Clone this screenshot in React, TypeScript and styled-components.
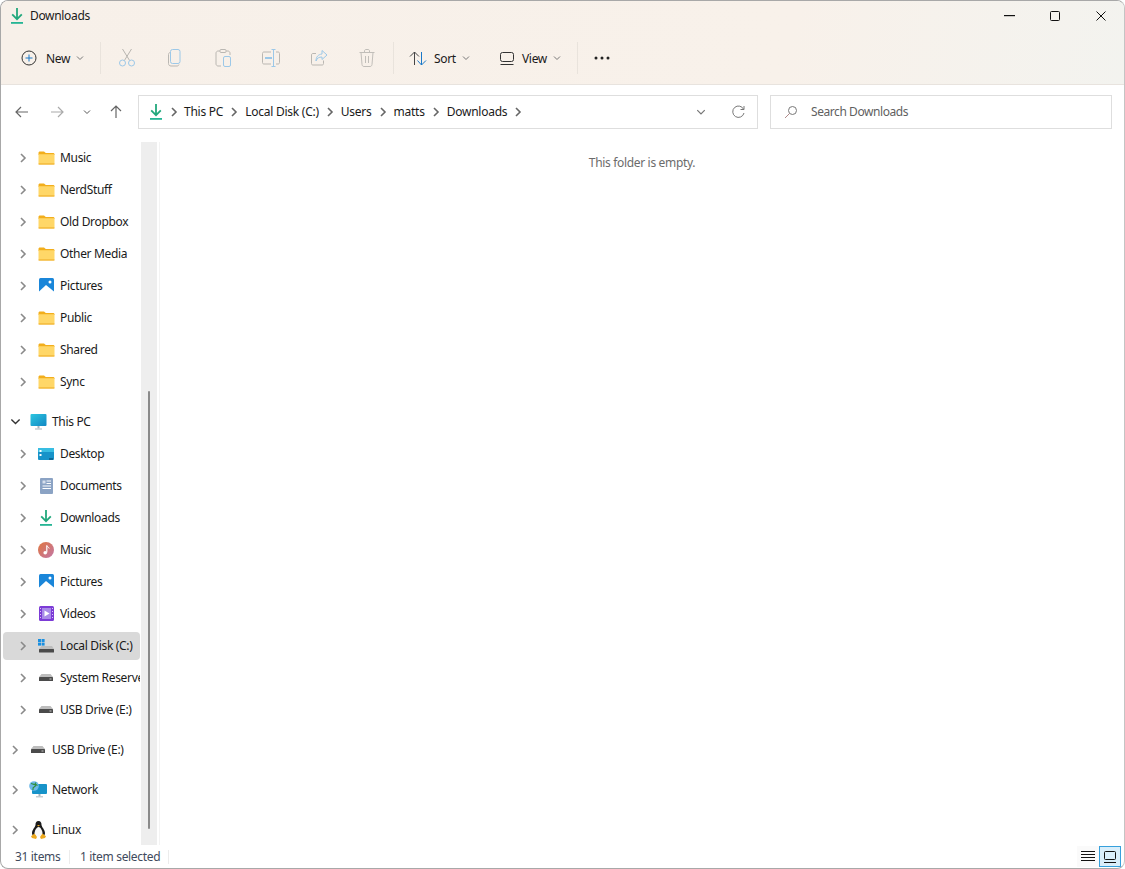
import type { ReactNode } from "react";
import styled, { createGlobalStyle } from "styled-components";

const GlobalStyle = createGlobalStyle`
  html, body {
    margin: 0;
    padding: 0;
    background: #fff;
  }
  body {
    font-family: "Noto Sans", "Open Sans", sans-serif;
    font-size: 12px;
    letter-spacing: -0.33px;
    color: #1a1a1a;
  }
`;

const Window = styled.div`
  box-sizing: border-box;
  width: 1125px;
  height: 869px;
  display: flex;
  flex-direction: column;
  overflow: hidden;
  background: #fff;
  border: 1px solid #a8a8a8;
  border-right-color: #c4c4c4;
  border-radius: 8px;
`;

const Header = styled.header`
  height: 83px;
  flex: none;
  display: flex;
  flex-direction: column;
  background: linear-gradient(100deg, #f7f0e9 0%, #f8f1ea 70%, #f3f3ef 100%);
  border-bottom: 1px solid #e8e3de;
`;

const TitleBar = styled.div`
  height: 31px;
  box-sizing: border-box;
  display: flex;
  align-items: center;
  padding: 0 0 2px 9px;
`;

const Title = styled.span`
  flex: 1;
  margin-left: 6px;
  line-height: 16px;
`;

const WinButton = styled.div`
  width: 46px;
  height: 28px;
  display: flex;
  align-items: center;
  justify-content: center;
`;

const CommandBar = styled.div`
  height: 52px;
  display: flex;
  align-items: center;
  padding-left: 12px;
`;

const CommandButton = styled.div<{ $width: number }>`
  width: ${(p) => p.$width}px;
  height: 32px;
  flex: none;
  display: flex;
  align-items: center;
  padding-left: 8px;
  box-sizing: border-box;
`;

const CommandLabel = styled.span<{ $left: number; $width: number }>`
  margin-left: ${(p) => p.$left}px;
  width: ${(p) => p.$width}px;
  padding-top: 1px;
`;

const IconButton = styled.div`
  width: 48px;
  height: 32px;
  flex: none;
  display: flex;
  align-items: center;
  justify-content: center;
`;

const Separator = styled.div<{ $left: number; $right: number }>`
  width: 1px;
  height: 32px;
  flex: none;
  background: #e9e3dc;
  margin: 0 ${(p) => p.$right}px 0 ${(p) => p.$left}px;
`;

const AddressRow = styled.div`
  height: 57px;
  flex: none;
  display: flex;
  align-items: center;
  padding-bottom: 4px;
  box-sizing: border-box;
`;

const NavArrows = styled.div`
  width: 137px;
  flex: none;
  display: flex;
  align-items: center;
  padding-left: 12px;
  box-sizing: border-box;
`;

const NavArrow = styled.div<{ $width: number }>`
  width: ${(p) => p.$width}px;
  display: flex;
  justify-content: center;
  flex: none;
`;

const Field = styled.div`
  height: 34px;
  box-sizing: border-box;
  border: 1px solid #dedede;
  background: #fff;
  display: flex;
  align-items: center;
`;

const AddressField = styled(Field)`
  width: 620px;
  flex: none;
  padding-left: 10px;
`;

const Crumb = styled.span`
  white-space: nowrap;
  letter-spacing: -0.25px;
`;

const CrumbSep = styled.div<{ $width: number }>`
  width: ${(p) => p.$width}px;
  flex: none;
  display: flex;
  justify-content: center;
`;

const Spring = styled.div`
  flex: 1;
`;

const FieldAction = styled.div<{ $width: number }>`
  width: ${(p) => p.$width}px;
  flex: none;
  display: flex;
  justify-content: center;
`;

const SearchField = styled(Field)`
  width: 342px;
  flex: none;
  margin-left: 12px;
  padding-left: 13px;
  gap: 13px;
  color: #5f5f5f;
  letter-spacing: -0.43px;
`;

const Body = styled.div`
  flex: 1;
  min-height: 0;
  display: flex;
`;

const Nav = styled.nav`
  width: 140px;
  flex: none;
  overflow: hidden;
  display: flex;
  flex-direction: column;
`;

const NavRow = styled.div<{ $level: number; $gap?: boolean; $selected?: boolean }>`
  height: 28px;
  flex: none;
  box-sizing: border-box;
  margin: ${(p) => (p.$gap ? 10 : 2)}px 1px 2px 2px;
  border-radius: 4px;
  overflow: hidden;
  display: flex;
  align-items: center;
  padding: 0 0 1px ${(p) => (p.$level === 2 ? 15 : 7)}px;
  white-space: nowrap;
  background: ${(p) => (p.$selected ? "#d9d9d9" : "transparent")};
`;

const Twisty = styled.div`
  width: 20px;
  flex: none;
  display: flex;
  justify-content: center;
  margin-left: -5px;
`;

const NavIcon = styled.div`
  width: 18px;
  height: 18px;
  flex: none;
  margin: 0 5px 0 4px;
  display: flex;
  align-items: center;
  justify-content: center;
`;

const ScrollGutter = styled.div`
  width: 16px;
  flex: none;
  background: #eeeeee;
  display: flex;
  justify-content: center;
`;

const ScrollThumb = styled.div`
  width: 2px;
  height: 438px;
  margin-top: 249px;
  border-radius: 1px;
  background: #8a8a8a;
`;

const Content = styled.main`
  flex: 1;
  margin-left: 2px;
  border-left: 1px solid #f3f3f3;
  display: flex;
  justify-content: center;
  padding-top: 13px;
  color: #6b6b6b;
`;

const EmptyNote = styled.span`
  line-height: 16px;
`;

const StatusBar = styled.footer`
  height: 23px;
  flex: none;
  display: flex;
  align-items: center;
  padding: 0 3px 0 14px;
  color: #3f4a5c;
`;

const StatusText = styled.span<{ $width: number }>`
  width: ${(p) => p.$width}px;
  flex: none;
`;

const StatusDivider = styled.div`
  width: 1px;
  height: 14px;
  flex: none;
  background: #ececec;
  margin-right: 10px;
`;

const ViewToggle = styled.div<{ $active?: boolean }>`
  width: 22px;
  height: 21px;
  box-sizing: border-box;
  flex: none;
  display: flex;
  align-items: center;
  justify-content: center;
  background: ${(p) => (p.$active ? "#d9eefa" : "#fafafa")};
  border: 1px solid ${(p) => (p.$active ? "#36a0dc" : "transparent")};
`;

const DownloadIcon = () => (
  <svg width="14" height="16" viewBox="0 0 14 16" fill="none">
    <path d="M7 0v11M2.2 6.4 7 11.200l4.800-4.800" stroke="#22a87c" strokeWidth="1.800" />
    <rect x="1" y="14" width="12" height="1.800" fill="#25b594" />
  </svg>
);

const Chevron = ({ color = "#8a8a8a", width = 1.6 }: { color?: string; width?: number }) => (
  <svg width="8" height="10" viewBox="0 0 8 10">
    <path d="M2 1l4 4-4 4" fill="none" stroke={color} strokeWidth={width} />
  </svg>
);

const ChevronDown = ({ color = "#777", size = 8 }: { color?: string; size?: number }) => (
  <svg width={size} height={size} viewBox="0 0 8 8">
    <path d="M1 2.500 4 5.500 7 2.500" fill="none" stroke={color} strokeWidth="1" />
  </svg>
);

const Folder = () => (
  <svg width="17" height="14" viewBox="0 0 17 14">
    <path d="M.5 2C.5 1 1 .5 2 .5h4l1.800 1.600H15c1 0 1.500.5 1.500 1.500V4H.5z" fill="#f2ae1c" />
    <path d="M.5 3.200h16V12c0 1-.5 1.500-1.500 1.500H2C1 13.500.5 13 .5 12z" fill="#ffd768" />
    <rect x=".5" y="12.500" width="16" height="1" fill="#eeaa20" />
  </svg>
);

const PicturesIcon = () => (
  <svg width="15" height="15" viewBox="0 0 15 15">
    <rect width="15" height="15" rx="1.500" fill="#1a86d9" />
    <path d="M0 13.500 7 7l8 6.500V15H0z" fill="#fff" />
    <circle cx="11" cy="4" r="1.500" fill="#fff" />
  </svg>
);

const DesktopIcon = () => (
  <svg width="16" height="12" viewBox="0 0 16 12">
    <rect width="16" height="12" rx="1" fill="#1793c9" />
    <rect width="16" height="4" fill="#38bde2" />
    <rect x="1.500" y="2" width="2" height="2" fill="#fff" />
    <rect x="1.500" y="6" width="2" height="2" fill="#fff" />
    <rect x="11" y="10.500" width="4" height="1" fill="#063e66" />
  </svg>
);

const DocumentsIcon = () => (
  <svg width="13" height="16" viewBox="0 0 13 16">
    <rect width="13" height="16" rx="1" fill="#8ba3c4" />
    <path d="M6.500 3H11M6.500 5.500H11M2.500 8H11M2.500 10.500H11" stroke="#fff" strokeWidth="1" />
    <rect x="2.500" y="2.500" width="3" height="3" fill="#d7e0ec" />
  </svg>
);

const MusicIcon = () => (
  <svg width="16" height="16" viewBox="0 0 16 16">
    <defs>
      <linearGradient id="musicFill" x1="0" y1="0" x2="1" y2="1">
        <stop offset="0" stopColor="#e0763f" />
        <stop offset="1" stopColor="#c277a8" />
      </linearGradient>
    </defs>
    <circle cx="8" cy="8" r="8" fill="url(#musicFill)" />
    <path d="M8.800 3.500v7" stroke="#fff" strokeWidth="1.200" />
    <path d="M8.800 3.500c.5 1.500 2 1.500 2.400 3" stroke="#fff" strokeWidth="1" fill="none" />
    <circle cx="7.200" cy="10.800" r="1.800" fill="#fff" />
  </svg>
);

const VideosIcon = () => (
  <svg width="15" height="15" viewBox="0 0 15 15">
    <rect width="15" height="15" rx="1.500" fill="#7c3bd6" />
    <rect x="3" y="2" width="9" height="11" fill="#a98be8" />
    <path d="M5.500 4.500v6l5-3z" fill="#fff" />
    <path d="M1 2.500h1M1 5.500h1M1 8.500h1M1 11.500h1M13 2.500h1M13 5.500h1M13 8.500h1M13 11.500h1" stroke="#d9c8f7" strokeWidth="1" />
  </svg>
);

const DiskIcon = () => (
  <svg width="14" height="7" viewBox="0 0 14 7">
    <path d="M2.500 0h9L14 3H0z" fill="#bdbdbd" />
    <rect y="3" width="14" height="4" rx=".6" fill="#4b4b4b" />
    <rect x="10.500" y="4.500" width="2" height="1" fill="#c8c8c8" />
  </svg>
);

const SystemDiskIcon = () => (
  <svg width="17" height="14" viewBox="0 0 17 14">
    <rect width="3" height="3" fill="#1a8fe0" />
    <rect x="3.600" width="3" height="3" fill="#1a8fe0" />
    <rect y="3.600" width="3" height="3" fill="#1a8fe0" />
    <rect x="3.600" y="3.600" width="3" height="3" fill="#1a8fe0" />
    <path d="M3.500 7H14l2 3H1z" fill="#bdbdbd" />
    <rect x="1" y="10" width="15" height="3.600" rx=".6" fill="#4b4b4b" />
  </svg>
);

const PcIcon = () => (
  <svg width="17" height="16" viewBox="0 0 16 16">
    <defs>
      <linearGradient id="pcFill" x1="0" y1="0" x2="1" y2="1">
        <stop offset="0" stopColor="#2cc6e0" />
        <stop offset="1" stopColor="#1188c4" />
      </linearGradient>
    </defs>
    <rect width="16" height="12" rx="1" fill="url(#pcFill)" />
    <rect x="7" y="12" width="2" height="2.400" fill="#a8b4bc" />
    <rect x="4.500" y="14.400" width="7" height="1.200" fill="#b8c2c8" />
  </svg>
);

const NetworkIcon = () => (
  <svg width="18" height="17" viewBox="0 0 18 17">
    <rect x="3" y="3" width="15" height="10" rx="1" fill="#1793c9" />
    <rect x="9.500" y="13" width="2" height="2.200" fill="#a8b4bc" />
    <rect x="7" y="15.200" width="7" height="1.200" fill="#b8c2c8" />
    <circle cx="5" cy="5" r="4.800" fill="#6bb8e8" />
    <path d="M2 2.500c1.500 0 2 1 3.500 1s1 2-.5 2.500-1 2.500-1 3M7 1.500 6 3l2.500 1.500" stroke="#2f8f3c" strokeWidth="1.200" fill="none" />
  </svg>
);

const LinuxIcon = () => (
  <svg width="15" height="18" viewBox="0 0 15 18">
    <path d="M7.500 0C9.800 0 10.500 1.800 10.500 3.800c0 2.200 3.300 4.700 3.500 8.200.1 1.500-.8 2.500-2 3H3c-1.200-.5-2.100-1.500-2-3 .2-3.500 3.500-6 3.500-8.200C4.500 1.800 5.200 0 7.500 0z" fill="#1c1c1c" />
    <path d="M7.500 6C9.500 6 11.500 9.500 11.500 12.500S9.500 15.500 7.500 15.500 3.500 15 3.500 12.500 5.500 6 7.500 6z" fill="#f7f7f7" />
    <path d="M6 3.900h3L7.500 5.500z" fill="#e9a820" />
    <path d="M3.500 12.500 0 15.200l1 1.800 4 1 1-2zM11.500 12.500l3.500 2.700-1 1.800-4 1-1-2z" fill="#eeaa1f" />
  </svg>
);

const CutIcon = () => (
  <svg width="20" height="20" viewBox="0 0 20 20" fill="none">
    <path d="M5.500 1 12.600 12.500M14.500 1 7.400 12.500" stroke="#b8b5b0" strokeWidth="1" />
    <circle cx="5.500" cy="15" r="3" stroke="#9cc8e8" strokeWidth="1" />
    <circle cx="14.500" cy="15" r="3" stroke="#9cc8e8" strokeWidth="1" />
  </svg>
);

const CopyIcon = () => (
  <svg width="20" height="20" viewBox="0 0 20 20" fill="none">
    <path d="M5 4.500c-1 .3-1.500 1-1.500 2v9c0 1.500 1 2.500 2.500 2.500h6c1 0 1.700-.5 2-1.500" stroke="#bab7b2" strokeWidth="1" />
    <rect x="5.500" y="1.500" width="9.500" height="14" rx="2" stroke="#9cc8e8" strokeWidth="1" />
  </svg>
);

const PasteIcon = () => (
  <svg width="20" height="20" viewBox="0 0 20 20" fill="none">
    <path d="M8 18H5c-1 0-2-1-2-2V5c0-1 1-2 2-2h10c1 0 2 1 2 2v2" stroke="#bab7b2" strokeWidth="1" />
    <rect x="7" y="1.500" width="6" height="3" rx="1" stroke="#bab7b2" strokeWidth="1" fill="#f7f0e9" />
    <rect x="10.500" y="8.500" width="7" height="10" rx="1.500" stroke="#9cc8e8" strokeWidth="1" />
  </svg>
);

const RenameIcon = () => (
  <svg width="20" height="20" viewBox="0 0 20 20" fill="none">
    <path d="M10 4H3c-1 0-1.500.5-1.500 1.500v9c0 1 .5 1.500 1.500 1.500h7M15 4h2c1 0 1.500.5 1.500 1.500v9c0 1-.5 1.500-1.500 1.500h-2" stroke="#bab7b2" strokeWidth="1" />
    <rect x="4" y="9" width="7" height="2" fill="#9cc8e8" />
    <path d="M10.500 1.500h4M10.500 18.500h4M12.500 1.500v17" stroke="#9cc8e8" strokeWidth="1" />
  </svg>
);

const ShareIcon = () => (
  <svg width="20" height="20" viewBox="0 0 20 20" fill="none">
    <path d="M14.500 12.500v3c0 1-.5 1.500-1.500 1.500H4c-1 0-1.500-.5-1.500-1.500V7C2.500 6 3 5.500 4 5.500h3" stroke="#bab7b2" strokeWidth="1" />
    <path d="M13 2.500 18 7l-5 4.500V9c-3 0-5 1-6 4 0-4 2-6.500 6-7z" stroke="#9cc8e8" strokeWidth="1" strokeLinejoin="round" />
  </svg>
);

const DeleteIcon = () => (
  <svg width="20" height="20" viewBox="0 0 20 20" fill="none" stroke="#c1beb9" strokeWidth="1">
    <path d="M2.500 4.500h15M7.500 4.500V3c0-.8.5-1.500 1.500-1.500h2c1 0 1.500.7 1.500 1.500v1.500" />
    <path d="M4 4.500 5 16.500c.1 1 .7 2 2 2h6c1.300 0 1.900-1 2-2l1-12M8.500 8v7M11.500 8v7" />
  </svg>
);

const NewIcon = () => (
  <svg width="16" height="16" viewBox="0 0 16 16" fill="none">
    <circle cx="8" cy="8" r="7" stroke="#333" strokeWidth="1" />
    <path d="M8 4.500v7M4.500 8h7" stroke="#1a78c8" strokeWidth="1" />
  </svg>
);

const SortIcon = () => (
  <svg width="18" height="15" viewBox="0 0 18 15" fill="none" strokeWidth="1">
    <path d="M5.500 14V1M1 5.500 5.500 1 10 5.500" stroke="#444" />
    <path d="M12.500 1v13M8.500 9.500 12.500 14l4.500-4.500" stroke="#1a78c8" />
  </svg>
);

const ViewIcon = () => (
  <svg width="14" height="13" viewBox="0 0 14 13" fill="none" stroke="#333" strokeWidth="1">
    <rect x=".5" y=".5" width="13" height="9" rx="2" />
    <path d="M.5 12.500h13" />
  </svg>
);

const MoreIcon = () => (
  <svg width="16" height="4" viewBox="0 0 16 4" fill="#222">
    <circle cx="2" cy="2" r="1.500" />
    <circle cx="8" cy="2" r="1.500" />
    <circle cx="14" cy="2" r="1.500" />
  </svg>
);

const ArrowLeft = () => (
  <svg width="14" height="12" viewBox="0 0 14 12" fill="none" stroke="#666" strokeWidth="1.200">
    <path d="M13 6H1M6 1 1 6l5 5" />
  </svg>
);

const ArrowRight = () => (
  <svg width="14" height="12" viewBox="0 0 14 12" fill="none" stroke="#aaa" strokeWidth="1.200">
    <path d="M1 6h12M8 1l5 5-5 5" />
  </svg>
);

const ArrowUp = () => (
  <svg width="12" height="14" viewBox="0 0 12 14" fill="none" stroke="#666" strokeWidth="1.200">
    <path d="M6 13V1M1 6l5-5 5 5" />
  </svg>
);

const RefreshIcon = () => (
  <svg width="13" height="13" viewBox="0 0 13 13" fill="none" stroke="#777" strokeWidth="1">
    <path d="M11.700 4.500A5.700 5.700 0 1 0 12 8" />
    <path d="M12 1v3.500H8.500" />
  </svg>
);

const SearchIcon = () => (
  <svg width="14" height="14" viewBox="0 0 14 14" fill="none">
    <circle cx="8.500" cy="5.500" r="4" stroke="#777" strokeWidth="1" />
    <path d="M5.500 8.500 1 13" stroke="#b08a8a" strokeWidth="1" />
  </svg>
);

const Minimize = () => (
  <svg width="11" height="2" viewBox="0 0 11 2">
    <rect width="11" height="1.200" fill="#111" />
  </svg>
);

const Maximize = () => (
  <svg width="10" height="10" viewBox="0 0 10 10" fill="none" stroke="#111" strokeWidth="1">
    <rect x=".5" y=".5" width="9" height="9" rx="1" />
  </svg>
);

const CloseIcon = () => (
  <svg width="10" height="10" viewBox="0 0 10 10" fill="none" stroke="#111" strokeWidth="1">
    <path d="M.5.5l9 9M9.500.5l-9 9" />
  </svg>
);

const ListViewIcon = () => (
  <svg width="14" height="11" viewBox="0 0 14 11" stroke="#111" strokeWidth="1">
    <path d="M0 .5h14M0 3.500h14M0 6.500h14M0 9.500h14" />
  </svg>
);

const TileViewIcon = () => (
  <svg width="12" height="12" viewBox="0 0 12 12" fill="none" stroke="#111" strokeWidth="1">
    <rect x=".5" y=".5" width="11" height="8" rx="1" />
    <path d="M0 11.500h12" />
  </svg>
);

type NavEntry = {
  label: string;
  icon: ReactNode;
  level: 1 | 2;
  open?: boolean;
  gap?: boolean;
  selected?: boolean;
};

const navEntries: NavEntry[] = [
  { label: "Music", icon: <Folder />, level: 2 },
  { label: "NerdStuff", icon: <Folder />, level: 2 },
  { label: "Old Dropbox", icon: <Folder />, level: 2 },
  { label: "Other Media", icon: <Folder />, level: 2 },
  { label: "Pictures", icon: <PicturesIcon />, level: 2 },
  { label: "Public", icon: <Folder />, level: 2 },
  { label: "Shared", icon: <Folder />, level: 2 },
  { label: "Sync", icon: <Folder />, level: 2 },
  { label: "This PC", icon: <PcIcon />, level: 1, open: true, gap: true },
  { label: "Desktop", icon: <DesktopIcon />, level: 2 },
  { label: "Documents", icon: <DocumentsIcon />, level: 2 },
  { label: "Downloads", icon: <DownloadIcon />, level: 2 },
  { label: "Music", icon: <MusicIcon />, level: 2 },
  { label: "Pictures", icon: <PicturesIcon />, level: 2 },
  { label: "Videos", icon: <VideosIcon />, level: 2 },
  { label: "Local Disk (C:)", icon: <SystemDiskIcon />, level: 2, selected: true },
  { label: "System Reserved (D:)", icon: <DiskIcon />, level: 2 },
  { label: "USB Drive (E:)", icon: <DiskIcon />, level: 2 },
  { label: "USB Drive (E:)", icon: <DiskIcon />, level: 1, gap: true },
  { label: "Network", icon: <NetworkIcon />, level: 1, gap: true },
  { label: "Linux", icon: <LinuxIcon />, level: 1, gap: true },
];

const crumbs = ["This PC", "Local Disk (C:)", "Users", "matts", "Downloads"];

const App = () => (
  <>
    <GlobalStyle />
    <Window>
      <Header>
        <TitleBar>
          <DownloadIcon />
          <Title>Downloads</Title>
          <WinButton><Minimize /></WinButton>
          <WinButton><Maximize /></WinButton>
          <WinButton><CloseIcon /></WinButton>
        </TitleBar>
        <CommandBar>
          <CommandButton $width={79}>
            <NewIcon />
            <CommandLabel $left={9} $width={30}>New</CommandLabel>
            <ChevronDown />
          </CommandButton>
          <Separator $left={8} $right={2} />
          <IconButton><CutIcon /></IconButton>
          <IconButton><CopyIcon /></IconButton>
          <IconButton><PasteIcon /></IconButton>
          <IconButton><RenameIcon /></IconButton>
          <IconButton><ShareIcon /></IconButton>
          <IconButton><DeleteIcon /></IconButton>
          <Separator $left={2} $right={7} />
          <CommandButton $width={91}>
            <SortIcon />
            <CommandLabel $left={7} $width={28}>Sort</CommandLabel>
            <ChevronDown />
          </CommandButton>
          <CommandButton $width={85}>
            <ViewIcon />
            <CommandLabel $left={8} $width={31}>View</CommandLabel>
            <ChevronDown />
          </CommandButton>
          <Separator $left={0} $right={16} />
          <MoreIcon />
        </CommandBar>
      </Header>
      <AddressRow>
        <NavArrows>
          <NavArrow $width={18}><ArrowLeft /></NavArrow>
          <NavArrow $width={52}><ArrowRight /></NavArrow>
          <NavArrow $width={8}><ChevronDown color="#555" /></NavArrow>
          <NavArrow $width={50}><ArrowUp /></NavArrow>
        </NavArrows>
        <AddressField>
          <DownloadIcon />
          <CrumbSep $width={21}><Chevron color="#666" /></CrumbSep>
          {crumbs.flatMap((crumb) => [
            <Crumb key={crumb}>{crumb}</Crumb>,
            <CrumbSep key={`${crumb}-sep`} $width={22}><Chevron color="#666" /></CrumbSep>,
          ])}
          <Spring />
          <FieldAction $width={36}><ChevronDown size={10} /></FieldAction>
          <FieldAction $width={38}><RefreshIcon /></FieldAction>
        </AddressField>
        <SearchField>
          <SearchIcon />
          Search Downloads
        </SearchField>
      </AddressRow>
      <Body>
        <Nav>
          {navEntries.map((entry, i) => (
            <NavRow key={i} $level={entry.level} $gap={entry.gap} $selected={entry.selected}>
              <Twisty>
                {entry.open ? <ChevronDown color="#333" size={11} /> : <Chevron />}
              </Twisty>
              <NavIcon>{entry.icon}</NavIcon>
              {entry.label}
            </NavRow>
          ))}
        </Nav>
        <ScrollGutter>
          <ScrollThumb />
        </ScrollGutter>
        <Content>
          <EmptyNote>This folder is empty.</EmptyNote>
        </Content>
      </Body>
      <StatusBar>
        <StatusText $width={54}>31 items</StatusText>
        <StatusDivider />
        <StatusText $width={88}>1 item selected</StatusText>
        <StatusDivider />
        <Spring />
        <ViewToggle><ListViewIcon /></ViewToggle>
        <ViewToggle $active><TileViewIcon /></ViewToggle>
      </StatusBar>
    </Window>
  </>
);

export default App;
